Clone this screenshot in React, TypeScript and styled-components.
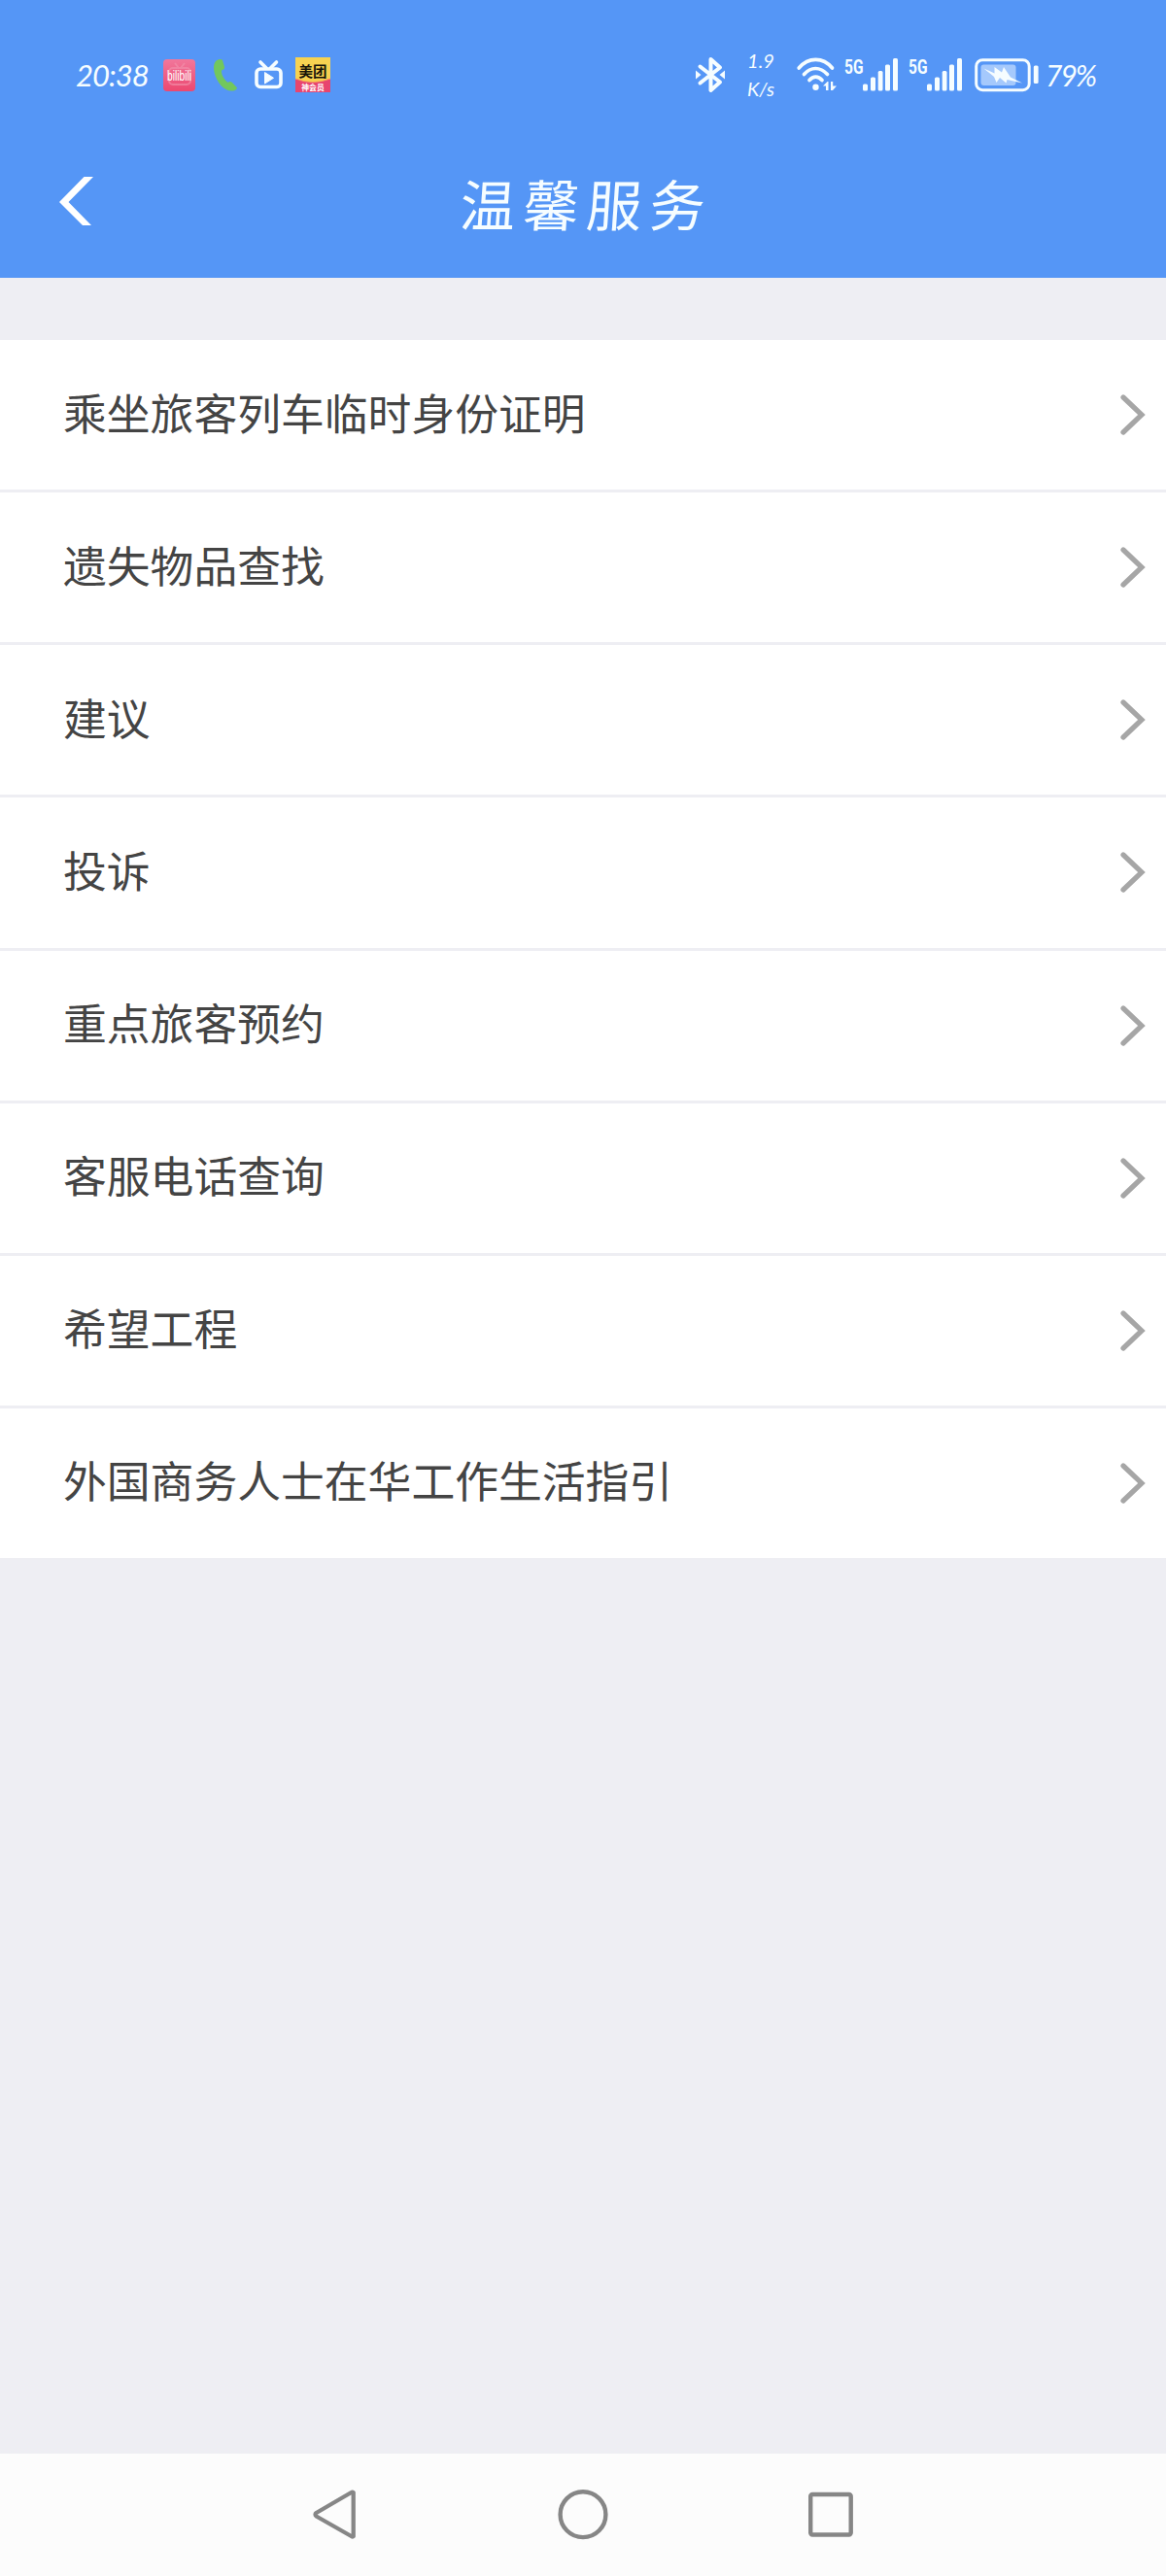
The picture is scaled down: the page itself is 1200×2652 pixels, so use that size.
import React from "react";
import styled, { createGlobalStyle } from "styled-components";

const CJK = '"Noto Sans CJK SC", sans-serif';

const GlobalStyle = createGlobalStyle`
  * { box-sizing: border-box; }
  body { margin: 0; background: #eeeef3; }
`;

const Screen = styled.div`
  width: 1200px;
  height: 2652px;
  display: flex;
  flex-direction: column;
  background: #eeeef3;
  font-family: ${CJK};
  overflow: hidden;
`;

const Header = styled.header`
  height: 286px;
  display: flex;
  flex-direction: column;
  background: #5596f6;
  color: #f6fdff;
`;

const StatusBar = styled.div`
  height: 154px;
  padding: 0 72px 0 78px;
  display: flex;
  align-items: center;
  justify-content: space-between;
`;

const StatusGroup = styled.div`
  display: flex;
  align-items: center;
`;

const Slot = styled.div<{ $gap: number }>`
  display: flex;
  margin-left: ${(p) => p.$gap}px;
  svg { display: block; overflow: visible; }
`;

const Clock = styled.span`
  width: 76px;
  font: italic 400 31px/36px Lato, sans-serif;
  letter-spacing: -1px;
  white-space: nowrap;
`;

const Speed = styled.div`
  width: 28px;
  margin-left: 23px;
  display: flex;
  flex-direction: column;
  align-items: center;
  font: italic 400 20px/29px Lato, sans-serif;
  white-space: nowrap;
`;

const Percent = styled.span`
  width: 52px;
  margin-left: 7px;
  font: italic 400 30px/36px Lato, sans-serif;
  letter-spacing: -2px;
  white-space: nowrap;
`;

const TitleBar = styled.div`
  height: 132px;
  padding: 0 61px;
  display: grid;
  grid-template-columns: 36px 1fr 36px;
  align-items: start;
`;

const BackButton = styled.button`
  width: 36px;
  height: 50px;
  margin-top: 28px;
  padding: 0;
  border: 0;
  background: none;
  svg { display: block; }
`;

const Title = styled.h1`
  margin: 18px 0 0;
  font-size: 57px;
  line-height: 72px;
  font-weight: 400;
  letter-spacing: 8px;
  text-indent: 8px;
  text-align: center;
  transform: skewX(-4deg);
`;

const List = styled.ul`
  list-style: none;
  margin: 64px 0 0;
  padding: 0;
  height: 1254px;
  display: flex;
  flex-direction: column;
  gap: 3px;
`;

const Row = styled.li`
  flex: 1;
  display: flex;
  align-items: center;
  justify-content: space-between;
  padding: 0 21px 0 65px;
  background: #fff;
  color: #444;
`;

const RowLabel = styled.span`
  font-size: 44.8px;
  line-height: 60px;
  margin-top: -7px;
  white-space: nowrap;
`;

const NavBar = styled.nav`
  height: 126px;
  margin-top: auto;
  padding: 0 317px;
  display: flex;
  align-items: center;
  justify-content: space-between;
  background: #fcfcfc;
  svg { display: block; }
`;

const BiliBadge = () => (
  <svg width="33" height="33" viewBox="0 0 33 33">
    <defs>
      <linearGradient id="bili" x1="0" y1="0" x2="0" y2="1">
        <stop offset="0" stopColor="#f1779b" />
        <stop offset="1" stopColor="#ec4870" />
      </linearGradient>
    </defs>
    <rect width="33" height="33" rx="4" fill="url(#bili)" />
    <g fill="none" stroke="#f294ae" strokeWidth="2" opacity=".6">
      <rect x="6" y="9" width="22" height="17" rx="4" />
      <path d="M12 4l4 5M22 4l-4 5" />
    </g>
    <text x="16.5" y="21.5" textAnchor="middle" textLength="25" lengthAdjust="spacingAndGlyphs"
      fontFamily="Liberation Sans, sans-serif" fontSize="14" fontWeight="400" fill="#fff">bilibili</text>
  </svg>
);

const Phone = () => (
  <svg width="26" height="34" viewBox="0 0 26 34">
    <path d="M3 3C6 .5 9 .5 10 2l2 7c.3 1.500-.5 2.500-3 3.500C8.500 17 12 22 15.500 25c1.500-1.200 3-1.200 4.200-.2l5 5.200c.8 1-.5 2.500-2.500 3.200-5 1.300-10-1-14-5.500C2 20.500-1.500 8 3 3z" fill="#72c75c" />
  </svg>
);

const TvIcon = () => (
  <svg width="29" height="30" viewBox="0 0 29 30">
    <g fill="none" stroke="#f6fdff" strokeLinecap="round" strokeWidth="3.600">
      <rect x="2" y="9" width="25" height="18.500" rx="4" />
      <path d="M6 2l6 6M22.500 2l-6 6" />
    </g>
    <path d="M10.500 12.500v11.500l9-5.700z" fill="#f6fdff" stroke="#f6fdff" strokeLinejoin="round" />
  </svg>
);

const MeituanBadge = () => (
  <svg width="36" height="36" viewBox="0 0 36 36">
    <rect width="36" height="36" fill="#f6d251" />
    <path d="M0 22q18 7 36 0v14H0z" fill="#e8456f" />
    <path d="M0 22q18 7 36 0" fill="none" stroke="#f6a15d" strokeWidth="1" />
    <text x="18" y="19.500" textAnchor="middle" fontFamily={CJK} fontSize="14.500" fontWeight="700" fill="#171409">美团</text>
    <text x="18" y="34" textAnchor="middle" fontFamily={CJK} fontSize="7.800" fontWeight="700" fill="#fff">神会员</text>
  </svg>
);

const Bluetooth = () => (
  <svg width="30" height="38" viewBox="0 0 30 38">
    <path d="M4.500 10.500L25 26.500 15.500 35V3L25 11.500 4.500 27.500" fill="none" stroke="#f6fdff" strokeWidth="4" strokeLinejoin="round" strokeLinecap="round" />
    <path d="M0 14.500l5.500 4.500L0 23.500zM30 14.500L24.500 19l5.500 4.500z" fill="#f6fdff" />
  </svg>
);

const Wifi = () => (
  <svg width="41" height="36" viewBox="0 0 41 36">
    <g fill="none" stroke="#f6fdff" strokeWidth="3.700" strokeLinecap="round">
      <path d="M2.200 11C12-.5 27-.5 36.500 11" />
      <path d="M7.500 17.500c7-8 16.500-8 24 0" />
      <path d="M13 23.500c4-4.500 9-4.500 13 0" />
    </g>
    <circle cx="19.500" cy="30.800" r="3.200" fill="#f6fdff" />
    <path d="M27 29.500l4.500-4.500h1v9h-2.500v-4.500zM35 25h2.200v4.500H41l-4 4.500h-2z" fill="#f6fdff" />
  </svg>
);

const Signal = () => (
  <svg width="56" height="34" viewBox="0 0 56 34">
    <text x="0" y="15.500" textLength="19.500" lengthAdjust="spacingAndGlyphs"
      fontFamily="Roboto, sans-serif" fontWeight="700" fontSize="21" fill="#f6fdff">5G</text>
    <g fill="#f6fdff">
      <rect x="19" y="26.500" width="5" height="7" rx="1.500" />
      <rect x="27" y="19.500" width="5" height="14" rx="1.500" />
      <rect x="34.700" y="13" width="4.800" height="20.500" rx="1.500" />
      <rect x="42" y="6.500" width="5" height="27" rx="1.500" />
      <rect x="50" y="0" width="5" height="33.500" rx="1.500" />
    </g>
  </svg>
);

const Battery = () => (
  <svg width="66" height="35" viewBox="0 0 66 35">
    <rect x="1.700" y="1.700" width="54.500" height="31" rx="6.500" fill="none" stroke="#f6fdff" strokeWidth="3" />
    <rect x="6.500" y="6.500" width="36" height="21.500" rx="3" fill="#a5c9fc" />
    <path d="M9.500 10.500L20.500 15.500 20.500 9 28 14.500 30 9 37 19.500 49 25.500 33.500 22 32.500 25.500 26 20 22.500 25 20 19z" fill="#f6fdff" />
    <rect x="60.800" y="7.500" width="4.800" height="18.500" rx="1.500" fill="#f6fdff" />
  </svg>
);

const Chevron = () => (
  <svg width="26" height="42" viewBox="0 0 26 42">
    <path d="M3 3L22 21 3 39" fill="none" stroke="#a6a6a6" strokeWidth="5.200" strokeLinecap="round" />
  </svg>
);

const services = [
  "乘坐旅客列车临时身份证明",
  "遗失物品查找",
  "建议",
  "投诉",
  "重点旅客预约",
  "客服电话查询",
  "希望工程",
  "外国商务人士在华工作生活指引",
];

export default function App() {
  return (
    <>
      <GlobalStyle />
      <Screen>
        <Header>
          <StatusBar>
            <StatusGroup>
              <Clock>20:38</Clock>
              <Slot $gap={14}><BiliBadge /></Slot>
              <Slot $gap={18}><Phone /></Slot>
              <Slot $gap={17}><TvIcon /></Slot>
              <Slot $gap={13}><MeituanBadge /></Slot>
            </StatusGroup>
            <StatusGroup>
              <Bluetooth />
              <Speed>
                <span>1.9</span>
                <span>K/s</span>
              </Speed>
              <Slot $gap={23}><Wifi /></Slot>
              <Slot $gap={8}><Signal /></Slot>
              <Slot $gap={10}><Signal /></Slot>
              <Slot $gap={12}><Battery /></Slot>
              <Percent>79%</Percent>
            </StatusGroup>
          </StatusBar>
          <TitleBar>
            <BackButton aria-label="返回">
              <svg width="36" height="50" viewBox="0 0 36 50">
                <path d="M25.500 0H35L9.500 26 33 50h-9L0 26z" fill="#fff" />
              </svg>
            </BackButton>
            <Title>温馨服务</Title>
          </TitleBar>
        </Header>
        <List>
          {services.map((name) => (
            <Row key={name}>
              <RowLabel>{name}</RowLabel>
              <Chevron />
            </Row>
          ))}
        </List>
        <NavBar>
          <svg width="54" height="54" viewBox="0 0 54 54">
            <path d="M46.700 4.200V49.200Q46 50 44.500 49L8.500 28.500Q6.500 26.700 8.500 25L44.500 4Q46 3 46.700 4.200z" fill="none" stroke="#868686" strokeWidth="4.300" strokeLinejoin="round" />
          </svg>
          <svg width="54" height="54" viewBox="0 0 54 54">
            <circle cx="27" cy="26.700" r="23.400" fill="none" stroke="#868686" strokeWidth="4.400" />
          </svg>
          <svg width="54" height="54" viewBox="0 0 54 54">
            <rect x="5.200" y="6" width="41.500" height="41.500" rx="2" fill="none" stroke="#868686" strokeWidth="4.400" />
          </svg>
        </NavBar>
      </Screen>
    </>
  );
}
